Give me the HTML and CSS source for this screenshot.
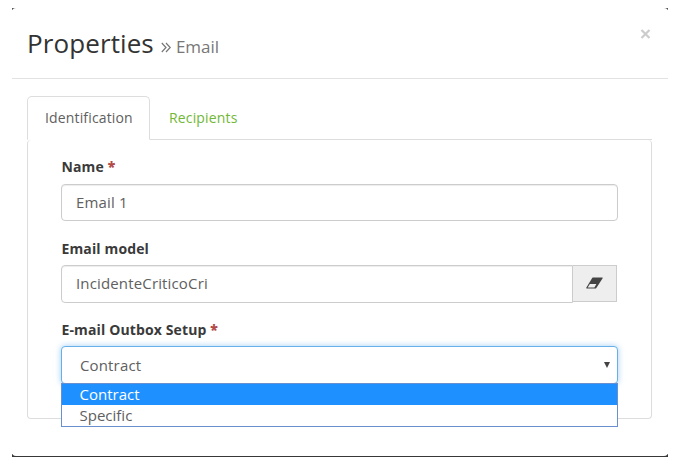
FILE: index.html
```
<!DOCTYPE html>
<html lang="en">
<head>
<meta charset="utf-8">
<title>Properties</title>
<link rel="stylesheet" href="styles.css">
</head>
<body>
<div class="frame">
<div class="modal">
  <header class="modal-header">
    <h1 class="title">Properties</h1>
    <svg class="chevrons" width="10" height="11" viewBox="0 0 10 11"><path d="M.8 1 5 5.500.8 10M5 1l4.200 4.500L5 10" fill="none" stroke="#777" stroke-width="1.200"/></svg>
    <span class="subtitle">Email</span>
    <button class="close" aria-label="Close"><svg width="11" height="10" viewBox="0 0 11 10"><path d="M1.500 1l8 8M9.500 1l-8 8" stroke="#ccc" stroke-width="2.200"/></svg></button>
  </header>
  <nav class="tabs">
    <a class="tab active">Identification</a>
    <a class="tab">Recipients</a>
  </nav>
  <form class="panel">
    <div class="field">
      <label>Name <b class="req">*</b></label>
      <div class="input">Email 1</div>
    </div>
    <div class="field">
      <label>Email model</label>
      <div class="group">
        <div class="input joined">IncidenteCriticoCri</div>
        <div class="addon"><svg width="17" height="12" viewBox="0 0 17 12"><path d="M7.200.5H16c.7 0 .8.500.5 1L10.300 10.900c-.3.400-.6.600-1 .6H1C.3 11.500.1 11 .4 10.500L6.200 1c.3-.4.600-.5 1-.5z" fill="#444"/><path d="M3.900 7h6.500L8.400 10.400H1.700z" fill="#eee"/></svg></div>
      </div>
    </div>
    <div class="field">
      <label>E-mail Outbox Setup <b class="req">*</b></label>
      <div class="select">
        <span>Contract</span>
        <svg width="6" height="6" viewBox="0 0 6 6"><path d="M0 0h6L3 6z" fill="#444"/></svg>
        <div class="menu">
          <div class="option selected">Contract</div>
          <div class="option">Specific</div>
        </div>
      </div>
    </div>
  </form>
</div>
</div>
</body>
</html>
```
FILE: styles.css
```
* { box-sizing: border-box; }
body { margin: 0; background: #fff; font-family: "Open Sans", sans-serif; color: #606060; }
.frame {
  width: 656px;
  height: 449px;
  margin: 8px 0 0 12px;
  background:
    linear-gradient(#555, #555) 0 0 / 4px 2px no-repeat,
    linear-gradient(#555, #555) 100% 0 / 4px 2px no-repeat,
    linear-gradient(#383838, #383838) 0 100% / 100% 3px no-repeat;
}
.modal { height: 448px; background: #fff; border-radius: 4px; }
.modal-header {
  display: flex;
  align-items: baseline;
  height: 71px;
  padding: 17px 17px 0 15px;
  border-bottom: 1px solid #e2e2e2;
}
.title { margin: 0; font-size: 26px; line-height: 36px; font-weight: 400; letter-spacing: .1px; color: #333; }
.chevrons { margin-left: 7px; }
.subtitle { margin-left: 5px; font-size: 17px; color: #777; }
.close { align-self: flex-start; display: flex; margin: 4px 0 0 auto; padding: 0; border: 0; background: none; }
.tabs { display: flex; height: 44px; margin: 17px 16px 0 15px; border-bottom: 1px solid #ddd; }
.tab { height: 43px; padding: 0 17px; line-height: 41px; font-size: 14px; letter-spacing: .15px; border: 1px solid transparent; color: #71b837; }
.tab.active { width: 123px; height: 44px; margin-right: 1px; border-color: #ddd #ddd #fff; border-radius: 5px 5px 0 0; background: #fff; color: #606060; }
.panel { height: 279px; margin: 0 16px 0 15px; padding: 17px 33px 0; border: 1px solid #ddd; border-top: 0; border-radius: 4px; }
.field { height: 81.500px; }
.field label { display: block; height: 27px; padding-left: .5px; line-height: 20px; font-size: 14px; font-weight: 700; letter-spacing: .13px; color: #3a3a3a; }
.req { color: #b24c4a; }
.input, .select { height: 37px; border: 1px solid #ccc; border-radius: 4px; padding: 0 14px; line-height: 35px; font-size: 15px; letter-spacing: .15px; background: #fff; box-shadow: inset 0 1px 1px rgba(0,0,0,.075); }
.group { display: flex; margin-top: -1px; }
.joined { width: 512px; height: 38px; border-radius: 4px 0 0 4px; }
.addon { display: flex; align-items: center; justify-content: center; width: 44px; height: 37px; border: 1px solid #ccc; border-left: 0; background: #eee; }
.select { position: relative; display: flex; align-items: center; justify-content: space-between; height: 38px; margin-top: -1px; padding: 0 7px 0 18px; border-color: #66afe9; box-shadow: 0 0 6px rgba(102,175,233,.6); }
.menu { position: absolute; left: -1px; right: -1px; top: 36px; height: 44px; border: 1px solid #6a8fce; background: #fff; line-height: 21px; }
.option { height: 21px; padding-left: 17.500px; font-size: 15px; letter-spacing: 0; }
.option.selected { background: #1e90ff; color: #fff; }
```
